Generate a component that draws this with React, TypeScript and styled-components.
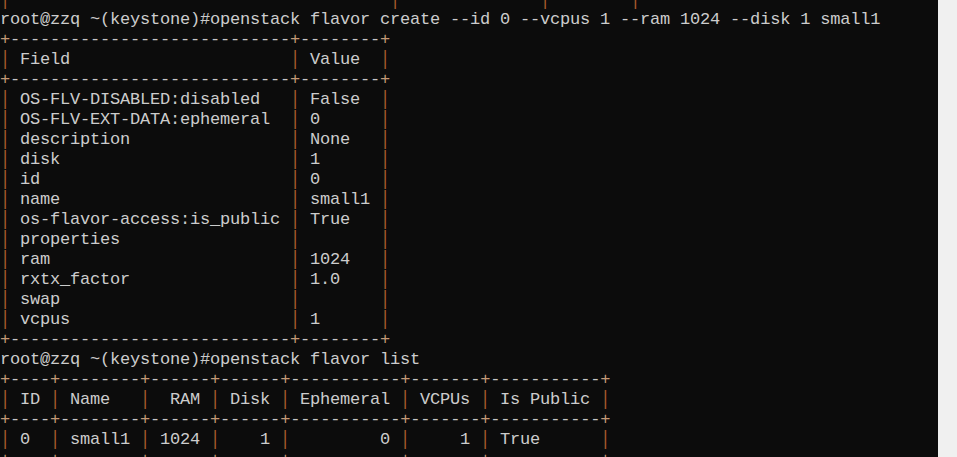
import React from "react";
import styled, { createGlobalStyle } from "styled-components";

const GlobalStyle = createGlobalStyle`
  html, body {
    margin: 0;
    padding: 0;
    background: #0c0c0c;
    overflow: hidden;
  }
`;

const Window = styled.div`
  display: flex;
  width: 957px;
  height: 457px;
  overflow: hidden;
`;

const Terminal = styled.div`
  flex: 1;
  background: #0c0c0c;
  overflow: hidden;
`;

const Screen = styled.div`
  margin-top: -10px;
  font-family: "Liberation Mono", "DejaVu Sans Mono", monospace;
  font-size: 17px;
  letter-spacing: -0.2px;
  color: #cccccc;
`;

const Line = styled.div`
  height: 20px;
  line-height: 20px;
  white-space: pre;
`;

const Bar = styled.span`
  display: inline-block;
  width: 10px;
  color: #a85a2c;
  transform: scaleY(1.2);
`;

const Rule = styled.span<{ $cross?: boolean }>`
  color: ${(p) => (p.$cross ? "#c49a78" : "#c4c4c4")};
`;

const Scrollbar = styled.div`
  width: 19px;
  flex: none;
  background: #f0f0f0;
`;

type Token = { kind: "text" | "bar" | "rule" | "cross"; value: string };

function tokenize(line: string, table: boolean): Token[] {
  const out: Token[] = [];
  for (const ch of line) {
    let kind: Token["kind"] = "text";
    if (table && ch === "|") kind = "bar";
    else if (table && ch === "+") kind = "cross";
    else if (table && ch === "-" && /^\+/.test(line)) kind = "rule";
    const last = out[out.length - 1];
    if (last && last.kind === kind && kind !== "bar") last.value += ch;
    else out.push({ kind, value: ch });
  }
  return out;
}

const TermLine: React.FC<{ text: string; table?: boolean }> = ({ text, table = false }) => (
  <Line>
    {tokenize(text, table).map((t, i) => {
      if (t.kind === "bar") return <Bar key={i}>|</Bar>;
      if (t.kind === "rule") return <Rule key={i}>{t.value}</Rule>;
      if (t.kind === "cross") return <Rule key={i} $cross>{t.value}</Rule>;
      return <React.Fragment key={i}>{t.value}</React.Fragment>;
    })}
  </Line>
);

const border = (widths: number[]) => "+" + widths.map((w) => "-".repeat(w + 2)).join("+") + "+";
const row = (cells: string[], widths: number[], right: boolean[] = []) =>
  "| " +
  cells
    .map((c, i) => (right[i] ? c.padStart(widths[i]) : c.padEnd(widths[i])))
    .join(" | ") +
  " |";

const flavorFields: [string, string][] = [
  ["OS-FLV-DISABLED:disabled", "False"],
  ["OS-FLV-EXT-DATA:ephemeral", "0"],
  ["description", "None"],
  ["disk", "1"],
  ["id", "0"],
  ["name", "small1"],
  ["os-flavor-access:is_public", "True"],
  ["properties", ""],
  ["ram", "1024"],
  ["rxtx_factor", "1.0"],
  ["swap", ""],
  ["vcpus", "1"],
];

const w0 = [36, 12, 6];
const w1 = [26, 6];
const w2 = [2, 6, 4, 4, 9, 5, 9];
const listHeader = ["ID", "Name", "RAM", "Disk", "Ephemeral", "VCPUs", "Is Public"];
const listRight = [false, false, true, true, true, true, false];
const listRows = [["0", "small1", "1024", "1", "0", "1", "True"]];

const prompt = "root@zzq ~(keystone)#";

export default function App() {
  const lines: { text: string; table: boolean }[] = [
    { text: row(["", "", ""], w0), table: true },
    { text: prompt + "openstack flavor create --id 0 --vcpus 1 --ram 1024 --disk 1 small1", table: false },
    { text: border(w1), table: true },
    { text: row(["Field", "Value"], w1), table: true },
    { text: border(w1), table: true },
    ...flavorFields.map(([f, v]) => ({ text: row([f, v], w1), table: true })),
    { text: border(w1), table: true },
    { text: prompt + "openstack flavor list", table: false },
    { text: border(w2), table: true },
    { text: row(listHeader, w2, listRight), table: true },
    { text: border(w2), table: true },
    ...listRows.map((r) => ({ text: row(r, w2, listRight), table: true })),
    { text: border(w2), table: true },
  ];
  return (
    <>
      <GlobalStyle />
      <Window>
        <Terminal>
          <Screen>
            {lines.map((l, i) => (
              <TermLine key={i} text={l.text} table={l.table} />
            ))}
          </Screen>
        </Terminal>
        <Scrollbar />
      </Window>
    </>
  );
}
